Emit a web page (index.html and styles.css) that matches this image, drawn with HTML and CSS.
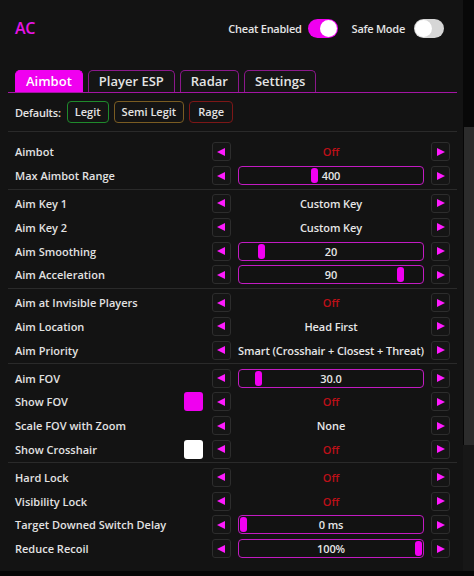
FILE: index.html
```html
<!DOCTYPE html>
<html>
<head>
<meta charset="utf-8">
<link rel="stylesheet" href="styles.css">
</head>
<body>
<div class="app">
  <div class="main">
    <header class="top">
      <span class="logo">AC</span>
      <div class="switches">
        <span class="sw-label">Cheat Enabled</span>
        <span class="toggle on"><i></i></span>
        <span class="sw-label safe">Safe Mode</span>
        <span class="toggle off"><i></i></span>
      </div>
    </header>

    <nav class="tabs">
      <span class="tab active">Aimbot</span>
      <span class="tab">Player ESP</span>
      <span class="tab">Radar</span>
      <span class="tab">Settings</span>
    </nav>

    <div class="defaults">
      <span class="def-label">Defaults:</span>
      <span class="preset legit">Legit</span>
      <span class="preset semi">Semi Legit</span>
      <span class="preset rage">Rage</span>
    </div>

    <div class="sep top-sep"></div>

    <div class="list">
      <div class="row"><span class="label">Aimbot</span><span class="arrow left"></span><div class="value off">Off</div><span class="arrow right"></span></div>
      <div class="row"><span class="label">Max Aimbot Range</span><span class="arrow left"></span><div class="value slider"><span class="thumb" style="left:72px"></span><span class="num">400</span></div><span class="arrow right"></span></div>
      <div class="sep"></div>
      <div class="row"><span class="label">Aim Key 1</span><span class="arrow left"></span><div class="value">Custom Key</div><span class="arrow right"></span></div>
      <div class="row"><span class="label">Aim Key 2</span><span class="arrow left"></span><div class="value">Custom Key</div><span class="arrow right"></span></div>
      <div class="row"><span class="label">Aim Smoothing</span><span class="arrow left"></span><div class="value slider"><span class="thumb" style="left:19px"></span><span class="num">20</span></div><span class="arrow right"></span></div>
      <div class="row"><span class="label">Aim Acceleration</span><span class="arrow left"></span><div class="value slider"><span class="thumb" style="left:158px"></span><span class="num">90</span></div><span class="arrow right"></span></div>
      <div class="sep"></div>
      <div class="row"><span class="label">Aim at Invisible Players</span><span class="arrow left"></span><div class="value off">Off</div><span class="arrow right"></span></div>
      <div class="row"><span class="label">Aim Location</span><span class="arrow left"></span><div class="value">Head First</div><span class="arrow right"></span></div>
      <div class="row"><span class="label">Aim Priority</span><span class="arrow left"></span><div class="value">Smart (Crosshair + Closest + Threat)</div><span class="arrow right"></span></div>
      <div class="sep"></div>
      <div class="row"><span class="label">Aim FOV</span><span class="arrow left"></span><div class="value slider"><span class="thumb" style="left:16px"></span><span class="num">30.0</span></div><span class="arrow right"></span></div>
      <div class="row"><span class="label">Show FOV</span><span class="swatch magenta"></span><span class="arrow left"></span><div class="value off">Off</div><span class="arrow right"></span></div>
      <div class="row"><span class="label">Scale FOV with Zoom</span><span class="arrow left"></span><div class="value">None</div><span class="arrow right"></span></div>
      <div class="row"><span class="label">Show Crosshair</span><span class="swatch white"></span><span class="arrow left"></span><div class="value off">Off</div><span class="arrow right"></span></div>
      <div class="sep"></div>
      <div class="row"><span class="label">Hard Lock</span><span class="arrow left"></span><div class="value off">Off</div><span class="arrow right"></span></div>
      <div class="row"><span class="label">Visibility Lock</span><span class="arrow left"></span><div class="value off">Off</div><span class="arrow right"></span></div>
      <div class="row"><span class="label">Target Downed Switch Delay</span><span class="arrow left"></span><div class="value slider"><span class="thumb" style="left:1px"></span><span class="num">0 ms</span></div><span class="arrow right"></span></div>
      <div class="row"><span class="label">Reduce Recoil</span><span class="arrow left"></span><div class="value slider"><span class="thumb" style="left:176px"></span><span class="num">100%</span></div><span class="arrow right"></span></div>
    </div>
  </div>
  <div class="scrollbar">
    <div class="sb-top"></div>
    <div class="sb-thumb"></div>
    <div class="sb-track"></div>
  </div>
</div>
</body>
</html>
```

FILE: styles.css
```css
html, body {
  margin: 0;
  padding: 0;
  background: #060606;
}
body {
  width: 474px;
  height: 576px;
  overflow: hidden;
  font-family: "Open Sans", "Noto Sans", sans-serif;
  font-weight: 600;
  color: #e4e4e4;
}
.app {
  display: flex;
  height: 571px;
}
.main {
  width: 463px;
  height: 571px;
  background: #131313;
  display: flex;
  flex-direction: column;
}
.top {
  display: flex;
  justify-content: space-between;
  align-items: center;
  padding: 18px 19px 0 15px;
  height: 20px;
}
.logo {
  color: #e614e6;
  font-size: 16px;
  font-weight: 600;
  letter-spacing: -0.3px;
}
.switches {
  display: flex;
  align-items: center;
}
.sw-label {
  font-size: 11px;
  letter-spacing: -0.25px;
  margin-right: 6px;
}
.sw-label.safe {
  margin-left: 14px;
  margin-right: 9px;
}
.toggle {
  width: 30px;
  height: 19px;
  border-radius: 10px;
  display: flex;
  align-items: center;
  padding: 0 1px;
  box-sizing: border-box;
}
.toggle i {
  width: 17px;
  height: 17px;
  border-radius: 50%;
  background: #ffffff;
}
.toggle.on {
  background: #f000f0;
  justify-content: flex-end;
}
.toggle.off {
  background: #d6d6d6;
  justify-content: flex-start;
}
.tabs {
  display: flex;
  gap: 5px;
  margin: 32px 6px 0 8px;
  padding-left: 7px;
  border-bottom: 1px solid #a315a3;
  height: 22px;
}
.tab {
  font-size: 13px;
  line-height: 21px;
  padding: 0 10px;
  border: 1px solid #8c188c;
  border-bottom: none;
  border-radius: 5px 5px 0 0;
  background: #151515;
}
.tab.active {
  background: #f000f0;
  border-color: #f000f0;
  color: #ffffff;
}
.defaults {
  display: flex;
  align-items: center;
  gap: 5px;
  padding: 8px 0 0 15px;
  height: 22px;
}
.def-label {
  font-size: 11px;
  letter-spacing: -0.2px;
  margin-right: 1px;
}
.preset {
  font-size: 11px;
  line-height: 20px;
  padding: 0 7px;
  border: 1px solid;
  border-radius: 4px;
  background: #141414;
}
.preset.legit { border-color: #1f8a2c; }
.preset.semi { border-color: #7a5c22; }
.preset.rage { border-color: #7d1717; padding: 0 8px; }
.sep {
  height: 1px;
  background: #2a2a2a;
  margin: 1px 6px 2px 8px;
}
.sep.top-sep {
  margin-top: 8px;
  margin-bottom: 8px;
}
.list {
  display: flex;
  flex-direction: column;
}
.row {
  display: flex;
  align-items: center;
  height: 23.8px;
  padding: 0 13px 0 15px;
}
.label {
  flex: 1;
  font-size: 11px;
  color: #e2e2e2;
}
.swatch {
  width: 19px;
  height: 19px;
  border-radius: 3px;
  margin-right: 9px;
}
.swatch.magenta { background: #f000f0; }
.swatch.white { background: #ffffff; }
.arrow {
  width: 19px;
  height: 19px;
  box-sizing: border-box;
  border: 1px solid #2d2d2d;
  border-radius: 3px;
  background: #151515;
  display: flex;
  align-items: center;
  justify-content: center;
}
.arrow::before {
  content: "";
  width: 0;
  height: 0;
  border-top: 4.5px solid transparent;
  border-bottom: 4.5px solid transparent;
}
.arrow.left::before {
  border-right: 8px solid #ff1aff;
  margin-right: 1px;
}
.arrow.right::before {
  border-left: 8px solid #ff1aff;
  margin-left: 1px;
}
.value {
  width: 186px;
  height: 19px;
  margin: 0 7px;
  display: flex;
  align-items: center;
  justify-content: center;
  font-size: 11px;
  color: #e6e6e6;
  white-space: nowrap;
  box-sizing: border-box;
  letter-spacing: -0.1px;
}
.value.off {
  color: #bd1018;
}
.value.slider {
  position: relative;
  border: 1px solid #c21bc2;
  border-radius: 4px;
  background: #121212;
}
.thumb {
  position: absolute;
  top: 1px;
  width: 7px;
  height: 15px;
  border-radius: 3px;
  background: #f000f0;
}
.num {
  position: relative;
}
.scrollbar {
  width: 11px;
  display: flex;
  flex-direction: column;
}
.sb-top {
  height: 127px;
  background: #080808;
}
.sb-thumb {
  height: 318px;
  margin-left: 1px;
  background: #2c2c2c;
}
.sb-track {
  flex: 1;
  background: #171717;
}
```
